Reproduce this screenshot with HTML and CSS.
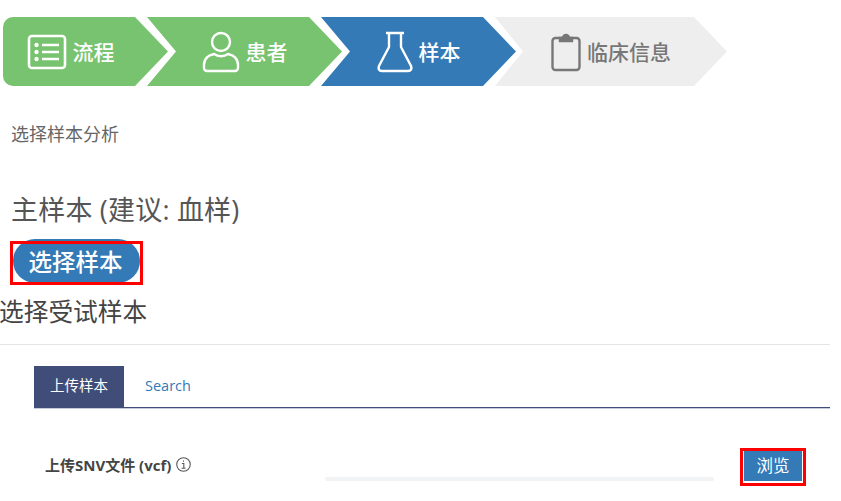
FILE: index.html
```html
<!DOCTYPE html>
<html lang="en">
<head>
  <meta charset="UTF-8">
  <title>选择样本</title>
  <link rel="stylesheet" href="styles.css">
</head>
<body>
  <div class="steps">
    <div class="step step-first done">
      <svg class="icon" width="40" height="36" viewBox="0 0 40 36" fill="none" stroke="currentColor" stroke-width="2.6">
        <rect x="2" y="2" width="36" height="32" rx="3"/>
        <path d="M15 11h17M15 18h17M15 25h17"/>
        <circle cx="9.5" cy="11" r="2.2" fill="currentColor" stroke="none"/>
        <circle cx="9.5" cy="18" r="2.2" fill="currentColor" stroke="none"/>
        <circle cx="9.5" cy="25" r="2.2" fill="currentColor" stroke="none"/>
      </svg>
      <span>流程</span>
    </div>
    <div class="step done">
      <svg class="icon" width="38" height="42" viewBox="0 0 38 42" fill="none" stroke="currentColor" stroke-width="2.4">
        <circle cx="19" cy="11" r="9"/>
        <path d="M12 23c-6 1-10 5-10 11v3a3 3 0 0 0 3 3h28a3 3 0 0 0 3-3v-3c0-6-4-10-10-11-4 3-10 3-14 0z"/>
      </svg>
      <span>患者</span>
    </div>
    <div class="step active">
      <svg class="icon" width="36" height="42" viewBox="0 0 36 42" fill="none" stroke="currentColor" stroke-width="2.4">
        <path d="M9 2h18M12 2v14L2 35c-1 3 0 5 3 5h26c3 0 4-2 3-5L24 16V2"/>
      </svg>
      <span>样本</span>
    </div>
    <div class="step step-last">
      <svg class="icon" width="30" height="40" viewBox="0 0 30 40" fill="none" stroke="currentColor" stroke-width="2.4">
        <rect x="1.500" y="6" width="27" height="32" rx="3"/>
        <path d="M9 6h3a3 3 0 0 1 6 0h3v3H9z" fill="currentColor"/>
      </svg>
      <span>临床信息</span>
    </div>
  </div>

  <p class="intro">选择样本分析</p>
  <h2 class="main-sample">主样本 (建议: 血样)</h2>
  <button class="pick-btn marked" type="button">选择样本</button>
  <h3 class="sub-title">选择受试样本</h3>

  <div class="panel">
    <div class="tabs">
      <div class="tab tab-active">上传样本</div>
      <div class="tab">Search</div>
    </div>
    <div class="upload-row">
      <div class="upload-label">
        上传SNV文件 (vcf)
        <svg class="info" width="15" height="15" viewBox="0 0 14 14" fill="none" stroke="currentColor">
          <circle cx="7" cy="7" r="6.300"/>
          <path d="M5.500 6h1.800v4.200M5.300 10.500h3.600M7 3.200v1.300"/>
        </svg>
      </div>
      <div class="upload-input"></div>
      <div class="browse-box"><button class="browse-btn" type="button">浏览</button></div>
    </div>
  </div>
</body>
</html>
```

FILE: styles.css
```css
body {
  margin: 0;
  height: 501px;
  overflow: hidden;
  background-color: #fff;
  color: #555;
  font-family: "Open Sans", "Noto Sans CJK SC", sans-serif;
}

.steps {
  display: flex;
  margin: 17px 0 0 3px;
  height: 69px;
}
.step {
  display: flex;
  align-items: center;
  justify-content: center;
  gap: 6px;
  width: 195px;
  margin-right: -21px;
  font-size: 21px;
  font-weight: 500;
  clip-path: polygon(0 0, 162px 0, 100% 50%, 162px 100%, 0 100%, 29px 50%);
}
.step span {
  margin-top: -2px;
}
.step.done {
  background-color: #78c36f;
  color: #fff;
}
.step.active {
  background-color: #337ab7;
  color: #fff;
}
.step-first {
  width: 165px;
  padding-right: 30px;
  box-sizing: border-box;
  border-radius: 10px 0 0 10px;
  clip-path: polygon(0 0, 132px 0, 100% 50%, 132px 100%, 0 100%);
}
.step-last {
  width: 232px;
  margin-right: 0;
  background-color: #eee;
  color: #777;
  clip-path: polygon(0 0, 199px 0, 100% 50%, 199px 100%, 0 100%, 28px 50%);
}

.intro {
  margin: 36px 0 0 11px;
  font-size: 18px;
  line-height: 24px;
  color: #666;
}
.main-sample {
  margin: 46px 0 0 11px;
  font-size: 27px;
  font-weight: 400;
  letter-spacing: 0.2px;
  line-height: 36px;
}

.pick-btn {
  display: block;
  margin: 11px 0 0 13px;
  width: 127px;
  height: 44px;
  padding: 2px 2px 0 0;
  border: none;
  border-radius: 22px;
  background-color: #337ab7;
  color: #fff;
  font: inherit;
  font-size: 23.500px;
  font-weight: 500;
  line-height: 42px;
}
.marked {
  position: relative;
}
.marked::after {
  content: "";
  position: absolute;
  left: -3px;
  top: 2px;
  right: -3px;
  bottom: -2px;
  border: 3px solid #f00;
}

.sub-title {
  margin: 11px 0 0 -1px;
  font-size: 24.700px;
  font-weight: 400;
  line-height: 36px;
  color: #444;
}

.panel {
  width: 830px;
  margin-top: 14px;
  padding: 21px 0 0 34px;
  box-sizing: border-box;
  border-top: 1px solid #e5e5e5;
}
.tabs {
  display: flex;
  height: 41px;
  border-bottom: 1px solid #3f4d78;
  box-shadow: 0 1px 0 #c4c9db;
}
.tab {
  padding: 0 21px;
  font-size: 14.500px;
  line-height: 39px;
  color: #337ab7;
}
.tab-active {
  width: 90px;
  padding: 0;
  text-align: center;
  font-size: 14.500px;
  background-color: #3f4d78;
  color: #fff;
}

.upload-row {
  display: flex;
  align-items: flex-start;
  margin-top: 40px;
  padding-left: 11px;
}
.upload-label {
  display: flex;
  align-items: center;
  gap: 5px;
  width: 280px;
  height: 32px;
  font-size: 15px;
  font-weight: 700;
  color: #444;
  white-space: nowrap;
}
.info {
  flex: none;
  color: #555;
}
.upload-input {
  width: 389px;
  height: 4px;
  margin-top: 29px;
  border-radius: 2px;
  background-color: #f2f3f5;
}
.browse-box {
  margin-left: 26px;
  border: 3px solid #f00;
  background-color: #fff;
  padding: 0 1px 1px;
  height: 31px;
}
.browse-btn {
  display: block;
  width: 58px;
  height: 30px;
  padding: 0;
  border: none;
  background-color: #337ab7;
  color: #fff;
  font: inherit;
  font-size: 16.500px;
  line-height: 30px;
}
```
